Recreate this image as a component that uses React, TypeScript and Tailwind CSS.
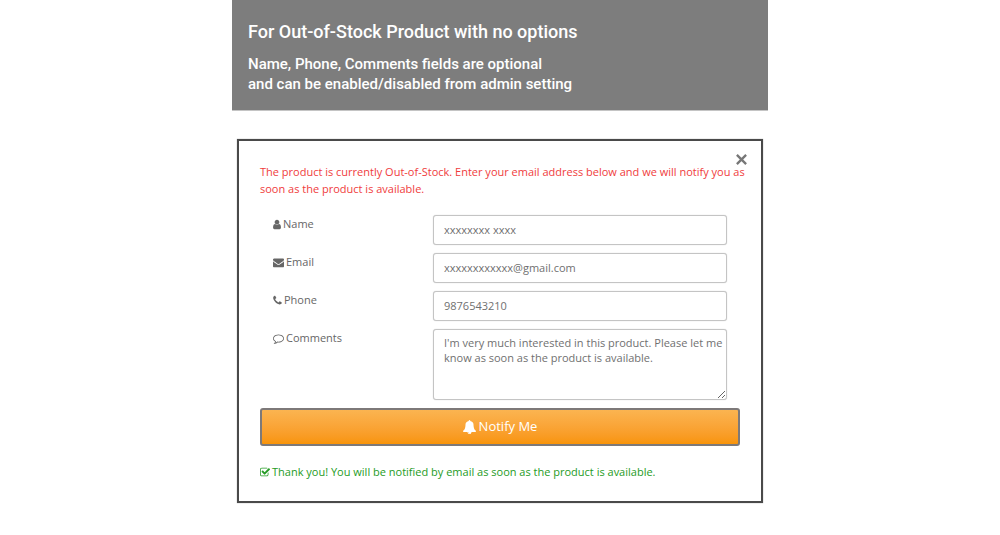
import React, { useState } from 'react';

const icons = {
    user: {
        box: '256 0 1280 1792',
        size: 'w-2 h-[11px]',
        d: 'M1536 1399q0 109-62.5 187t-150.5 78h-854q-88 0-150.5-78t-62.5-187q0-85 8.5-160.5t31.5-152 58.5-131 94-89 134.5-34.5q131 128 313 128t313-128q76 0 134.5 34.5t94 89 58.5 131 31.5 152 8.5 160.5zm-256-887q0 159-112.5 271.5t-271.5 112.5-271.5-112.5-112.5-271.5 112.5-271.5 271.5-112.5 271.5 112.5 112.5 271.5z',
    },
    envelope: {
        box: '0 0 1792 1792',
        size: 'w-[11px] h-[11px]',
        d: 'M1792 710v794q0 66-47 113t-113 47h-1472q-66 0-113-47t-47-113v-794q44 49 101 87 362 246 497 345 57 42 92.5 65.5t94.5 48 110 24.5h2q51 0 110-24.5t94.5-48 92.5-65.5q170-123 498-345 57-39 100-87zm0-294q0 79-49 151t-122 123q-376 261-468 325-10 7-42.5 31t-54 38.5-52 32.5-57.5 27-50 9h-2q-23 0-50-9t-57.5-27-52-32.5-54-38.5-42.5-31q-91-64-262-182.5t-205-142.5q-62-42-117-115.5t-55-136.5q0-78 41.5-130t118.5-52h1472q65 0 112.5 47t47.5 113z',
    },
    phone: {
        box: '192 0 1408 1792',
        size: 'w-[9px] h-[11px]',
        d: 'M1600 1240q0 27-10 70.5t-21 68.5q-21 50-122 106-94 51-186 51-27 0-53-3.5t-57.5-12.5-47-14.5-55.5-20.5-49-18q-98-35-175-83-127-79-264-216t-216-264q-48-77-83-175-3-9-18-49t-20.5-55.5-14.5-47-12.5-57.5-3.5-53q0-92 51-186 56-101 106-122 25-11 68.5-21t70.5-10q14 0 21 3 18 6 53 76 11 19 30 54t35 63.5 31 53.5q3 4 17.5 25t21.5 35.5 7 28.5q0 20-28.5 50t-62 55-62 53-28.5 46q0 9 5 22.5t8.5 20.5 14 24 11.5 19q76 137 174 235t235 174q2 1 19 11.5t24 14 20.5 8.5 22.5 5q18 0 46-28.5t53-62 55-62 50-28.5q14 0 28.5 7t35.5 21.5 25 17.5q25 15 53.5 31t63.5 35 54 30q70 35 76 53 3 7 3 21z',
    },
    comment: {
        box: '0 0 1792 1792',
        size: 'w-[11px] h-[11px]',
        d: 'M896 384q-204 0-381.5 69.5t-282 187.5-104.5 255q0 112 71.5 213.5t201.5 175.5l87 50-27 96q-24 91-70 172 152-63 275-171l43-38 57 6q69 8 130 8 204 0 381.5-69.5t282-187.5 104.5-255-104.5-255-282-187.5-381.5-69.5zm896 512q0 174-120 321.5t-326 233-450 85.5q-70 0-145-8-198 175-460 242-49 14-114 22h-5q-15 0-27-10.5t-16-27.5v-1q-3-4-.5-12t2-10 4.5-9.5l6-9 7-8.5 8-9q7-8 31-34.5t34.5-38 31-39.5 32.5-51 27-59 26-76q-157-89-247.5-220t-90.5-281q0-174 120-321.5t326-233 450-85.5 450 85.5 326 233 120 321.5z',
    },
    bell: {
        box: '64 0 1664 1792',
        size: 'w-[13px] h-[14px]',
        d: 'M912 1696q0-16-16-16-59 0-101.5-42.5t-42.5-101.5q0-16-16-16t-16 16q0 73 51.5 124.5t124.5 51.5q16 0 16-16zm816-288q0 52-38 90t-90 38h-448q0 106-75 181t-181 75-181-75-75-181h-448q-52 0-90-38t-38-90q50-42 91-88t85-119.5 74.5-158.5 50-206 19.5-260q0-152 117-282.5t307-158.5q-8-19-8-39 0-40 28-68t68-28 68 28 28 68q0 20-8 39 190 28 307 158.5t117 282.5q0 139 19.5 260t50 206 74.5 158.5 85 119.5 91 88z',
    },
    check: {
        box: '64 0 1664 1664',
        size: 'w-[10px] h-[10px]',
        d: 'M1472 930v318q0 119-84.5 203.5t-203.5 84.5h-832q-119 0-203.5-84.5t-84.5-203.5v-832q0-119 84.5-203.5t203.5-84.5h832q63 0 117 25 15 7 18 23 3 17-9 29l-49 49q-10 10-23 10-3 0-9-2-23-6-45-6h-832q-66 0-113 47t-47 113v832q0 66 47 113t113 47h832q66 0 113-47t47-113v-254q0-13 9-22l64-64q10-10 23-10 6 0 12 3 20 8 20 29zm231-489l-814 814q-24 24-57 24t-57-24l-430-430q-24-24-24-57t24-57l110-110q24-24 57-24t57 24l263 263 647-647q24-24 57-24t57 24l110 110q24 24 24 57t-24 57z',
    },
};

const Icon = ({ name }: { name: keyof typeof icons }) => (
    <svg viewBox={icons[name].box} className={`${icons[name].size} shrink-0`} fill="currentColor" aria-hidden="true">
        <path d={icons[name].d} />
    </svg>
);

const fields = [
    { id: 'name', label: 'Name', type: 'text', icon: 'user' },
    { id: 'email', label: 'Email', type: 'email', icon: 'envelope' },
    { id: 'phone', label: 'Phone', type: 'tel', icon: 'phone' },
] as const;

const labelClass = 'flex items-center gap-[2px] self-start px-[13px] pt-px text-[11px] leading-4 text-[#666]';
const inputClass = 'block w-full rounded-[3px] border border-[#c4c4c4] bg-white pl-[10px] text-[11px] text-[#707070] shadow-[0_0_1px_#c4c4c4] outline-none focus:border-[#9ab8d8]';

const App = () => {
    const [values, setValues] = useState({
        name: 'xxxxxxxx xxxx',
        email: 'xxxxxxxxxxxx@gmail.com',
        phone: '9876543210',
        comments: "I'm very much interested in this product. Please let me know as soon as the product is available.",
    });
    const [open, setOpen] = useState(true);
    const [sent, setSent] = useState(true);

    const update = (id: string, value: string) => {
        setValues({ ...values, [id]: value });
        setSent(false);
    };

    return (
        <main className="mx-auto max-w-[536px] bg-white pb-8 font-['Open_Sans',sans-serif]">
            <header className="border-b border-[#c4c4c4] bg-[#7d7d7d] px-4 pt-5 pb-4 font-[Roboto,sans-serif] font-medium text-white">
                <h1 className="text-[18px] leading-6 font-medium">For Out-of-Stock Product with no options</h1>
                <p className="mt-[10px] text-[15px] leading-5">
                    Name, Phone, Comments fields are optional
                    <br />
                    and can be enabled/disabled from admin setting
                </p>
            </header>

            {open && (
                <section className="relative mx-[5px] mt-7 border-2 border-[#4a4a4a] px-[21px] pt-[22px] pb-[21px] shadow-[0_0_1px_#999]">
                    <button
                        type="button"
                        aria-label="Close"
                        onClick={() => setOpen(false)}
                        className="absolute top-[11px] right-3 p-[2px] text-[#777]"
                    >
                        <svg viewBox="0 0 10 10" className="h-[11px] w-[11px]" fill="none" stroke="currentColor" strokeWidth="2.1" aria-hidden="true">
                            <path d="M.8.8l8.4 8.4M9.2.8L.8 9.2" />
                        </svg>
                    </button>

                    <p className="-mr-2 text-[11px] leading-[17px] text-[#f03c3c]">
                        The product is currently Out-of-Stock. Enter your email address below and we will notify you as soon as the product is available.
                    </p>

                    <form
                        className="mt-[18px]"
                        onSubmit={(e) => {
                            e.preventDefault();
                            setSent(true);
                        }}
                    >
                        <div className="flex flex-col gap-2">
                            {fields.map((field) => (
                                <div key={field.id} className="grid grid-cols-3">
                                    <label htmlFor={field.id} className={labelClass}>
                                        <Icon name={field.icon} />
                                        {field.label}
                                    </label>
                                    <div className="col-span-2 px-[13px]">
                                        <input
                                            id={field.id}
                                            type={field.type}
                                            value={values[field.id]}
                                            onChange={(e) => update(field.id, e.target.value)}
                                            className={`${inputClass} h-[30px] pb-[2px]`}
                                        />
                                    </div>
                                </div>
                            ))}
                            <div className="grid grid-cols-3">
                                <label htmlFor="comments" className={labelClass}>
                                    <Icon name="comment" />
                                    Comments
                                </label>
                                <div className="col-span-2 px-[13px]">
                                    <textarea
                                        id="comments"
                                        value={values.comments}
                                        onChange={(e) => update('comments', e.target.value)}
                                        className={`${inputClass} h-[71px] py-[5px] leading-[15px]`}
                                    />
                                </div>
                            </div>
                        </div>

                        <button
                            type="submit"
                            className="mt-2 flex h-[38px] w-full items-center justify-center gap-[3px] rounded-[3px] border-2 border-[#7d7979] bg-linear-to-b from-[#fbb450] to-[#f89406] text-[13px] text-white"
                        >
                            <Icon name="bell" />
                            Notify Me
                        </button>
                    </form>

                    <p role="status" className="mt-[18px] flex min-h-4 items-center gap-[2px] text-[11px] leading-4 text-[#259b25]">
                        {sent && (
                            <>
                                <Icon name="check" />
                                Thank you! You will be notified by email as soon as the product is available.
                            </>
                        )}
                    </p>
                </section>
            )}
        </main>
    );
};

export default App;
